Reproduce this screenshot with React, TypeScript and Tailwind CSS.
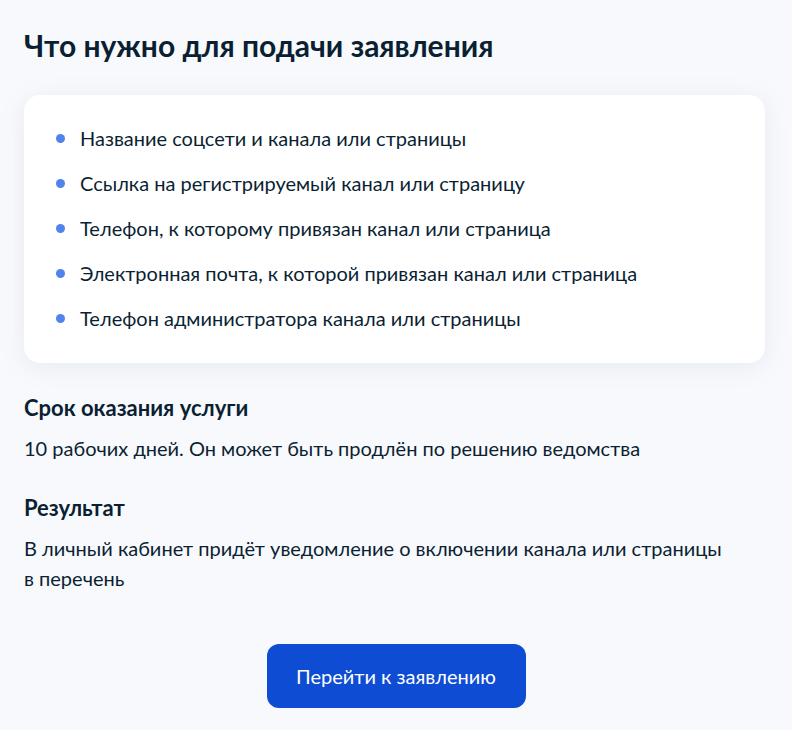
const requirements = [
  "Название соцсети и канала или страницы",
  "Ссылка на регистрируемый канал или страницу",
  "Телефон, к которому привязан канал или страница",
  "Электронная почта, к которой привязан канал или страница",
  "Телефон администратора канала или страницы",
]

export default function App() {
  return (
    <div className="min-h-[730px] w-[792px] bg-[#f8f9fc] px-6 pt-[26px] font-['Lato','Noto_Sans',sans-serif] text-[#0b1f33]">
      <h2 className="text-[30px] font-bold leading-[38px]">Что нужно для подачи заявления</h2>

      <div className="mt-[31px] w-[741px] rounded-2xl bg-white pl-8 pr-8 pt-[28px] pb-[30px] shadow-[0_4px_24px_rgba(105,130,180,0.12)]">
        <ul className="flex flex-col gap-[15px]">
          {requirements.map((item) => (
            <li key={item} className="flex items-center gap-[15px] text-[20px] leading-[30px]">
              <span className="h-[9px] w-[9px] shrink-0 rounded-full bg-[#5282ed]" />
              {item}
            </li>
          ))}
        </ul>
      </div>

      <h3 className="mt-[30px] text-[22px] font-bold leading-[30px]">Срок оказания услуги</h3>
      <p className="mt-[10px] text-[20px] leading-[30px]">10 рабочих дней. Он может быть продлён по решению ведомства</p>

      <h3 className="mt-[30px] text-[22px] font-bold leading-[30px]">Результат</h3>
      <p className="mt-[10px] w-[740px] text-[20px] leading-[30px]">
        В личный кабинет придёт уведомление о включении канала или страницы
        <br />в перечень
      </p>

      <div className="mt-[51px] flex justify-center">
        <button className="h-16 w-[259px] rounded-xl bg-[#0d4cd3] text-[20px] text-white">
          Перейти к заявлению
        </button>
      </div>
    </div>
  )
}
